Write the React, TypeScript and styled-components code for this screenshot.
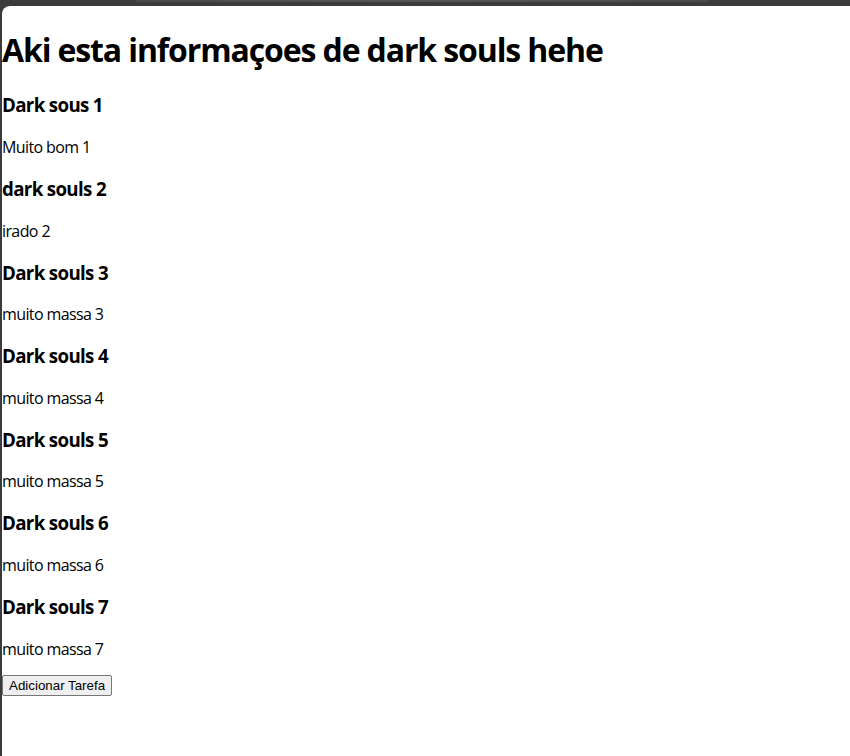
import styled, { createGlobalStyle } from 'styled-components';

const GlobalStyle = createGlobalStyle`
  html, body {
    margin: 0;
    padding: 0;
    height: 100%;
    background: #3b3b3b;
  }
  #root {
    height: 100%;
  }
`;

// ─── Window frame ──────────────────────────────────────────────────────────

const Frame = styled.div`
  display: flex;
  flex-direction: column;
  height: 100vh;
  background: #3b3b3b;
  overflow: hidden;
`;

const TopBar = styled.div`
  height: 6px;
  flex-shrink: 0;
  display: flex;
  padding-left: 135px;
`;

const TabEdge = styled.div`
  width: 574px;
  height: 2px;
  background: linear-gradient(90deg, #4a4a4a, #565656 50%, #4a4a4a);
  border-radius: 0 0 2px 2px;
`;

const Page = styled.main`
  flex: 1;
  margin-left: 2px;
  padding-top: 2px;
  background: #fff;
  border-top-left-radius: 8px;
  font-family: 'Open Sans', 'Noto Sans', sans-serif;
  color: #000;
  line-height: 1.33;
`;

// ─── Content ───────────────────────────────────────────────────────────────

const Title = styled.h1`
  font-size: 32px;
  font-weight: 700;
  letter-spacing: -0.035em;
  margin: 21.44px 0;
`;

const GameTitle = styled.h3`
  font-size: 18.72px;
  font-weight: 700;
  letter-spacing: -0.035em;
  margin: 18.72px 0;
`;

const GameText = styled.p`
  font-size: 16px;
  letter-spacing: -0.038em;
  margin: 16px 0;
`;

const AddButton = styled.button`
  display: block;
  height: 21px;
  margin-top: -1px;
  font-family: 'Liberation Sans', Arial, sans-serif;
  font-size: 13.33px;
  color: #000;
  background: #efefef;
  border: 1px solid #767676;
  border-radius: 2px;
  padding: 1px 6px;
  line-height: normal;
`;

const GAMES = [
  { title: 'Dark sous 1', text: 'Muito bom 1' },
  { title: 'dark souls 2', text: 'irado 2' },
  { title: 'Dark souls 3', text: 'muito massa 3' },
  { title: 'Dark souls 4', text: 'muito massa 4' },
  { title: 'Dark souls 5', text: 'muito massa 5' },
  { title: 'Dark souls 6', text: 'muito massa 6' },
  { title: 'Dark souls 7', text: 'muito massa 7' },
];

export default function App() {
  return (
    <>
      <GlobalStyle />
      <Frame>
        <TopBar>
          <TabEdge />
        </TopBar>
        <Page>
          <Title>Aki esta informaçoes de dark souls hehe</Title>
          {GAMES.map((g) => (
            <div key={g.title}>
              <GameTitle>{g.title}</GameTitle>
              <GameText>{g.text}</GameText>
            </div>
          ))}
          <AddButton>Adicionar Tarefa</AddButton>
        </Page>
      </Frame>
    </>
  );
}
